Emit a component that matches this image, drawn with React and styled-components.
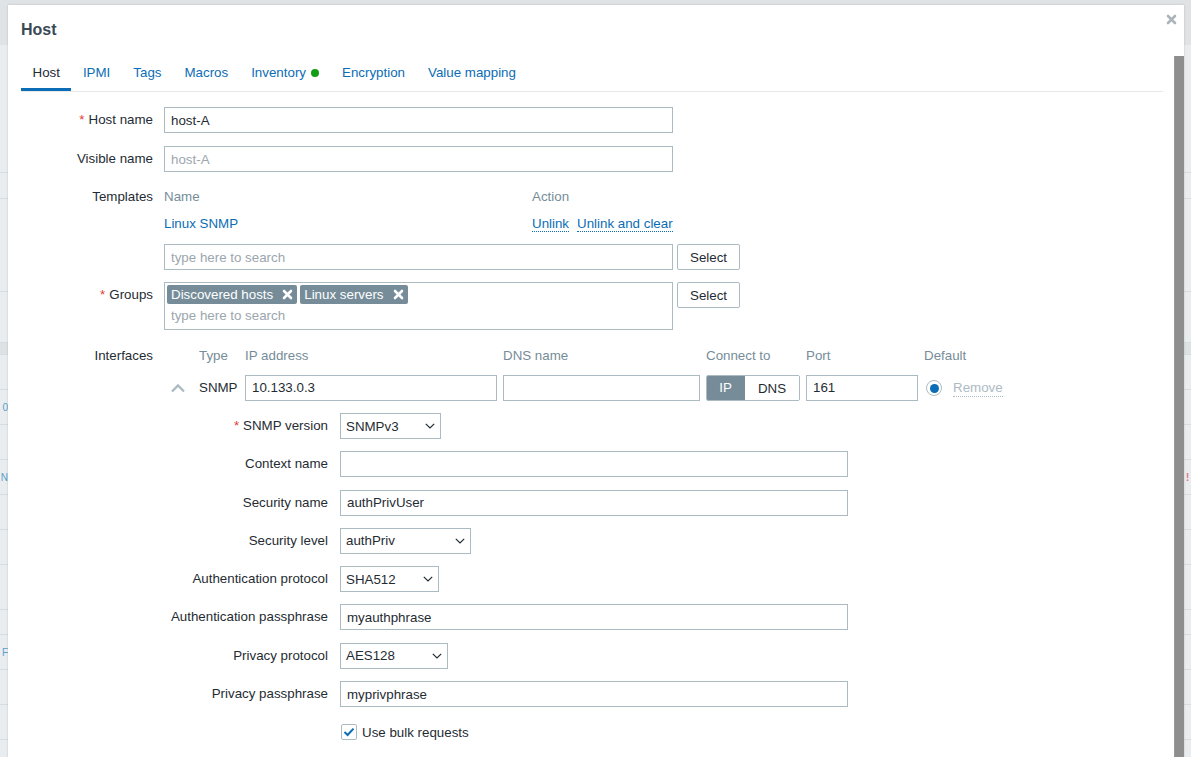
import styled, { createGlobalStyle } from 'styled-components';

const GlobalStyle = createGlobalStyle`
  html, body {
    margin: 0;
    padding: 0;
    height: 100%;
    overflow: hidden;
  }
  body {
    font-family: "Liberation Sans", Arial, sans-serif;
    font-size: 13.33px;
    color: #1f2c33;
    background: #eaedef;
  }
  * { box-sizing: border-box; }
`;

const BLUE = '#0b6db5';
const GREY = '#768d99';
const BORDER = '#acbbc2';

const bgRows = [
  { h: 128 }, { h: 26 }, { h: 93 }, { h: 51 }, { h: 12, band: true },
  { h: 35 }, { h: 35, left: '0' }, { h: 35 }, { h: 35, left: 'N', right: true },
  { h: 35 }, { h: 35 }, { h: 45 }, { h: 25 }, { h: 35, left: 'F' },
  { h: 35 }, { h: 35 }, { h: 35 },
];

const tabs = ['Host', 'IPMI', 'Tags', 'Macros', 'Inventory', 'Encryption', 'Value mapping'];

export default function App() {
  return (
    <Page>
      <GlobalStyle />
      <Backdrop>
        <TopBar />
        {bgRows.map((r, i) => (
          <BgRow key={i} $h={r.h} $band={r.band}>
            <BgLeft>{r.left}</BgLeft>
            {r.right && <BgMark>!</BgMark>}
          </BgRow>
        ))}
      </Backdrop>

      <Dialog>
        <DialogHeader>
          <Title>Host</Title>
          <CloseButton aria-label="Close">
            <XIcon size={11} color="#a9b4bb" />
          </CloseButton>
        </DialogHeader>

        <DialogBody>
          <Content>
            <TabBar>
              {tabs.map((t, i) => (
                <Tab key={t} $active={i === 0}>
                  {t}
                  {t === 'Inventory' && <StatusDot />}
                </Tab>
              ))}
            </TabBar>

            <Form>
              <Label><Req>*</Req>Host name</Label>
              <TextInput value="host-A" readOnly />

              <Label>Visible name</Label>
              <TextInput placeholder="host-A" readOnly />

              <Label $lh={24}>Templates</Label>
              <Block $tight>
                <TemplTable>
                  <ColHead $lh={24}>Name</ColHead>
                  <ColHead $lh={24}>Action</ColHead>
                  <TemplCell><Link>Linux SNMP</Link></TemplCell>
                  <TemplCell>
                    <DotLink>Unlink</DotLink>
                    <DotLink>Unlink and clear</DotLink>
                  </TemplCell>
                </TemplTable>
                <InputWithButton>
                  <TextInput placeholder="type here to search" readOnly />
                  <Button>Select</Button>
                </InputWithButton>
              </Block>

              <Label><Req>*</Req>Groups</Label>
              <InputWithButton>
                <MultiSelect>
                  <TagList>
                    <GroupTag>Discovered hosts<XIcon size={11} color="#fff" /></GroupTag>
                    <GroupTag>Linux servers<XIcon size={11} color="#fff" /></GroupTag>
                  </TagList>
                  <SearchLine>type here to search</SearchLine>
                </MultiSelect>
                <Button>Select</Button>
              </InputWithButton>

              <Label>Interfaces</Label>
              <Block>
                <InterfaceGrid>
                  <span />
                  <ColHead $lh={26}>Type</ColHead>
                  <ColHead $lh={26}>IP address</ColHead>
                  <ColHead $lh={26}>DNS name</ColHead>
                  <ColHead $lh={26}>Connect to</ColHead>
                  <ColHead $lh={26}>Port</ColHead>
                  <ColHead $lh={26}>Default</ColHead>

                  <Collapse>
                    <svg width="16" height="10" viewBox="0 0 16 10">
                      <path d="M2 8.5 L8 2.5 L14 8.5" fill="none" stroke={BORDER} strokeWidth="2.4" />
                    </svg>
                  </Collapse>
                  <span>SNMP</span>
                  <TextInput $w="100%" value="10.133.0.3" readOnly />
                  <TextInput $w="100%" readOnly />
                  <Toggle>
                    <ToggleItem $active>IP</ToggleItem>
                    <ToggleItem>DNS</ToggleItem>
                  </Toggle>
                  <TextInput $w="100%" value="161" readOnly />
                  <DefaultCell>
                    <Radio />
                    <MutedLink>Remove</MutedLink>
                  </DefaultCell>
                </InterfaceGrid>

                <SubForm>
                  <Label><Req>*</Req>SNMP version</Label>
                  <Select width={101} value="SNMPv3" />

                  <Label>Context name</Label>
                  <TextInput $w="508px" readOnly />

                  <Label>Security name</Label>
                  <TextInput $w="508px" value="authPrivUser" readOnly />

                  <Label>Security level</Label>
                  <Select width={131} value="authPriv" />

                  <Label>Authentication protocol</Label>
                  <Select width={99} value="SHA512" />

                  <Label>Authentication passphrase</Label>
                  <TextInput $w="508px" value="myauthphrase" readOnly />

                  <Label>Privacy protocol</Label>
                  <Select width={108} value="AES128" />

                  <Label>Privacy passphrase</Label>
                  <TextInput $w="508px" value="myprivphrase" readOnly />

                  <span />
                  <CheckRow>
                    <CheckBox>
                      <svg width="14" height="14" viewBox="0 0 14 14">
                        <path d="M2.5 7 L5.6 10 L11.5 3.6" fill="none" stroke={BLUE} strokeWidth="2" />
                      </svg>
                    </CheckBox>
                    Use bulk requests
                  </CheckRow>
                </SubForm>
              </Block>
            </Form>
          </Content>
          <ScrollThumb />
        </DialogBody>
      </Dialog>
    </Page>
  );
}

function XIcon({ size, color }) {
  return (
    <svg width={size} height={size} viewBox="0 0 11 11">
      <path d="M2 2 L9 9 M9 2 L2 9" stroke={color} strokeWidth="2.6" strokeLinecap="round" />
    </svg>
  );
}

function Select({ width, value }) {
  return (
    <SelectBox $w={width}>
      {value}
      <svg width="10" height="6" viewBox="0 0 10 6">
        <path d="M0.8 0.8 L5 5 L9.2 0.8" fill="none" stroke="#1f2c33" strokeWidth="1.2" />
      </svg>
    </SelectBox>
  );
}

const Page = styled.div`
  position: relative;
  height: 100vh;
  overflow: hidden;
`;

const Backdrop = styled.div`
  display: flex;
  flex-direction: column;
  height: 100%;
`;

const TopBar = styled.div`
  height: 45px;
  flex: none;
  background: #dfe3e6;
`;

const BgRow = styled.div`
  height: ${(p) => p.$h}px;
  flex: none;
  display: flex;
  align-items: center;
  justify-content: space-between;
  border-bottom: 1px solid #d8dde1;
  background: ${(p) => (p.$band ? '#dde2e5' : 'transparent')};
`;

const BgLeft = styled.div`
  width: 8px;
  display: flex;
  justify-content: flex-end;
  color: #5a9fcb;
  font-size: 10px;
  white-space: nowrap;
`;

const BgMark = styled.div`
  width: 7px;
  color: #e07a8a;
  font-size: 11px;
  font-weight: bold;
  text-align: center;
`;

const Dialog = styled.div`
  position: absolute;
  left: 8px;
  top: 5px;
  width: 1176px;
  height: 800px;
  background: #fff;
  box-shadow: 0 0 2px rgba(0, 0, 0, 0.18);
  display: flex;
  flex-direction: column;
`;

const DialogHeader = styled.div`
  position: relative;
  height: 51px;
  flex: none;
  padding: 15px 13px 0;
`;

const Title = styled.h3`
  margin: 0;
  font-size: 16px;
  line-height: 20px;
  font-weight: bold;
  color: #394a56;
`;

const CloseButton = styled.button`
  position: absolute;
  top: 9px;
  right: 7px;
  padding: 0;
  border: 0;
  background: none;
  display: flex;
`;

const DialogBody = styled.div`
  flex: 1;
  min-height: 0;
  display: flex;
`;

const Content = styled.div`
  flex: 1;
  padding: 3px 11px 0 13px;
`;

const ScrollThumb = styled.div`
  width: 10px;
  flex: none;
  background: #8e8e8e;
  border-left: 1px solid #999;
`;

const TabBar = styled.div`
  display: flex;
  border-bottom: 1px solid #e8e8e8;
`;

const Tab = styled.div`
  display: flex;
  align-items: center;
  gap: 5px;
  padding: 5px 11.5px 6px;
  line-height: 18px;
  border-bottom: 3px solid ${(p) => (p.$active ? BLUE : 'transparent')};
  color: ${(p) => (p.$active ? '#1f2c33' : BLUE)};
`;

const StatusDot = styled.span`
  width: 8px;
  height: 8px;
  border-radius: 50%;
  background: #139d17;
`;

const Form = styled.div`
  display: grid;
  grid-template-columns: 132px 1fr;
  column-gap: 11px;
  row-gap: 13px;
  margin-top: 15px;
  align-items: start;
`;

const Label = styled.div`
  text-align: right;
  line-height: ${(p) => p.$lh || 26}px;
  white-space: nowrap;
  color: #1f2c33;
`;

const Req = styled.span`
  color: #e33734;
  margin-right: 4px;
`;

const TextInput = styled.input`
  width: ${(p) => p.$w || '509px'};
  height: 26px;
  border: 1px solid ${BORDER};
  border-radius: 0;
  padding: 0 6px;
  font: inherit;
  color: #1f2c33;
  background: #fff;
  outline: none;
  &::placeholder {
    color: #9ba6ae;
  }
`;

const Block = styled.div`
  display: flex;
  flex-direction: column;
  margin-bottom: ${(p) => (p.$tight ? '-1px' : '0')};
`;

const TemplTable = styled.div`
  display: grid;
  grid-template-columns: 368px auto;
  margin-bottom: 5px;
`;

const ColHead = styled.div`
  color: ${GREY};
  line-height: ${(p) => p.$lh || 23}px;
  white-space: nowrap;
`;

const TemplCell = styled.div`
  line-height: 30px;
`;

const Link = styled.span`
  color: ${BLUE};
`;

const DotLink = styled.span`
  color: ${BLUE};
  border-bottom: 1px dotted ${BLUE};
  margin-right: 8px;
`;

const MutedLink = styled.span`
  color: ${BORDER};
  border-bottom: 1px dotted ${BORDER};
  line-height: 16px;
`;

const InputWithButton = styled.div`
  display: flex;
  align-items: flex-start;
  gap: 4px;
`;

const Button = styled.button`
  height: 26px;
  padding: 0 12px;
  border: 1px solid ${BORDER};
  border-radius: 2px;
  background: #fff;
  font: inherit;
  color: #1f2c33;
`;

const MultiSelect = styled.div`
  width: 509px;
  height: 48px;
  border: 1px solid ${BORDER};
  padding: 2px;
  display: flex;
  flex-direction: column;
`;

const TagList = styled.div`
  display: flex;
  gap: 3px;
`;

const GroupTag = styled.span`
  display: inline-flex;
  align-items: center;
  gap: 9px;
  height: 19px;
  padding: 0 4px;
  border-radius: 2px;
  background: ${GREY};
  color: #fff;
  white-space: nowrap;
`;

const SearchLine = styled.div`
  padding-left: 4px;
  line-height: 24px;
  color: #9ba6ae;
`;

const InterfaceGrid = styled.div`
  display: grid;
  grid-template-columns: 29px 40px 252px 197px 94px 112px auto;
  column-gap: 6px;
  row-gap: 6px;
  align-items: center;
  line-height: 26px;
`;

const Collapse = styled.div`
  display: flex;
  padding-left: 6px;
`;

const Toggle = styled.div`
  display: flex;
  height: 26px;
  border: 1px solid ${BORDER};
  border-radius: 2px;
  overflow: hidden;
`;

const ToggleItem = styled.div`
  width: ${(p) => (p.$active ? '39px' : 'auto')};
  flex: ${(p) => (p.$active ? 'none' : '1')};
  margin: ${(p) => (p.$active ? '-1px 0 -1px -1px' : '0')};
  text-align: center;
  line-height: 26px;
  background: ${(p) => (p.$active ? GREY : '#fff')};
  color: ${(p) => (p.$active ? '#fff' : '#1f2c33')};
`;

const DefaultCell = styled.div`
  display: flex;
  align-items: center;
  gap: 11px;
  padding-left: 2px;
`;

const Radio = styled.span`
  width: 16px;
  height: 16px;
  border-radius: 50%;
  border: 1px solid ${BORDER};
  display: flex;
  align-items: center;
  justify-content: center;
  &::after {
    content: '';
    width: 9px;
    height: 9px;
    border-radius: 50%;
    background: ${BLUE};
  }
`;

const SubForm = styled.div`
  display: grid;
  grid-template-columns: 164px 1fr;
  column-gap: 12px;
  row-gap: 12.3px;
  margin-top: 12px;
  align-items: center;
`;

const SelectBox = styled.div`
  width: ${(p) => p.$w}px;
  height: 26px;
  border: 1px solid ${BORDER};
  padding: 0 5px 0 5px;
  display: flex;
  align-items: center;
  justify-content: space-between;
  background: #fff;
  white-space: nowrap;
`;

const CheckRow = styled.div`
  display: flex;
  align-items: center;
  gap: 5px;
  height: 26px;
  padding-left: 1px;
`;

const CheckBox = styled.span`
  width: 16px;
  height: 16px;
  border: 1px solid ${BORDER};
  border-radius: 2px;
  display: flex;
  align-items: center;
  justify-content: center;
  background: #fff;
`;
